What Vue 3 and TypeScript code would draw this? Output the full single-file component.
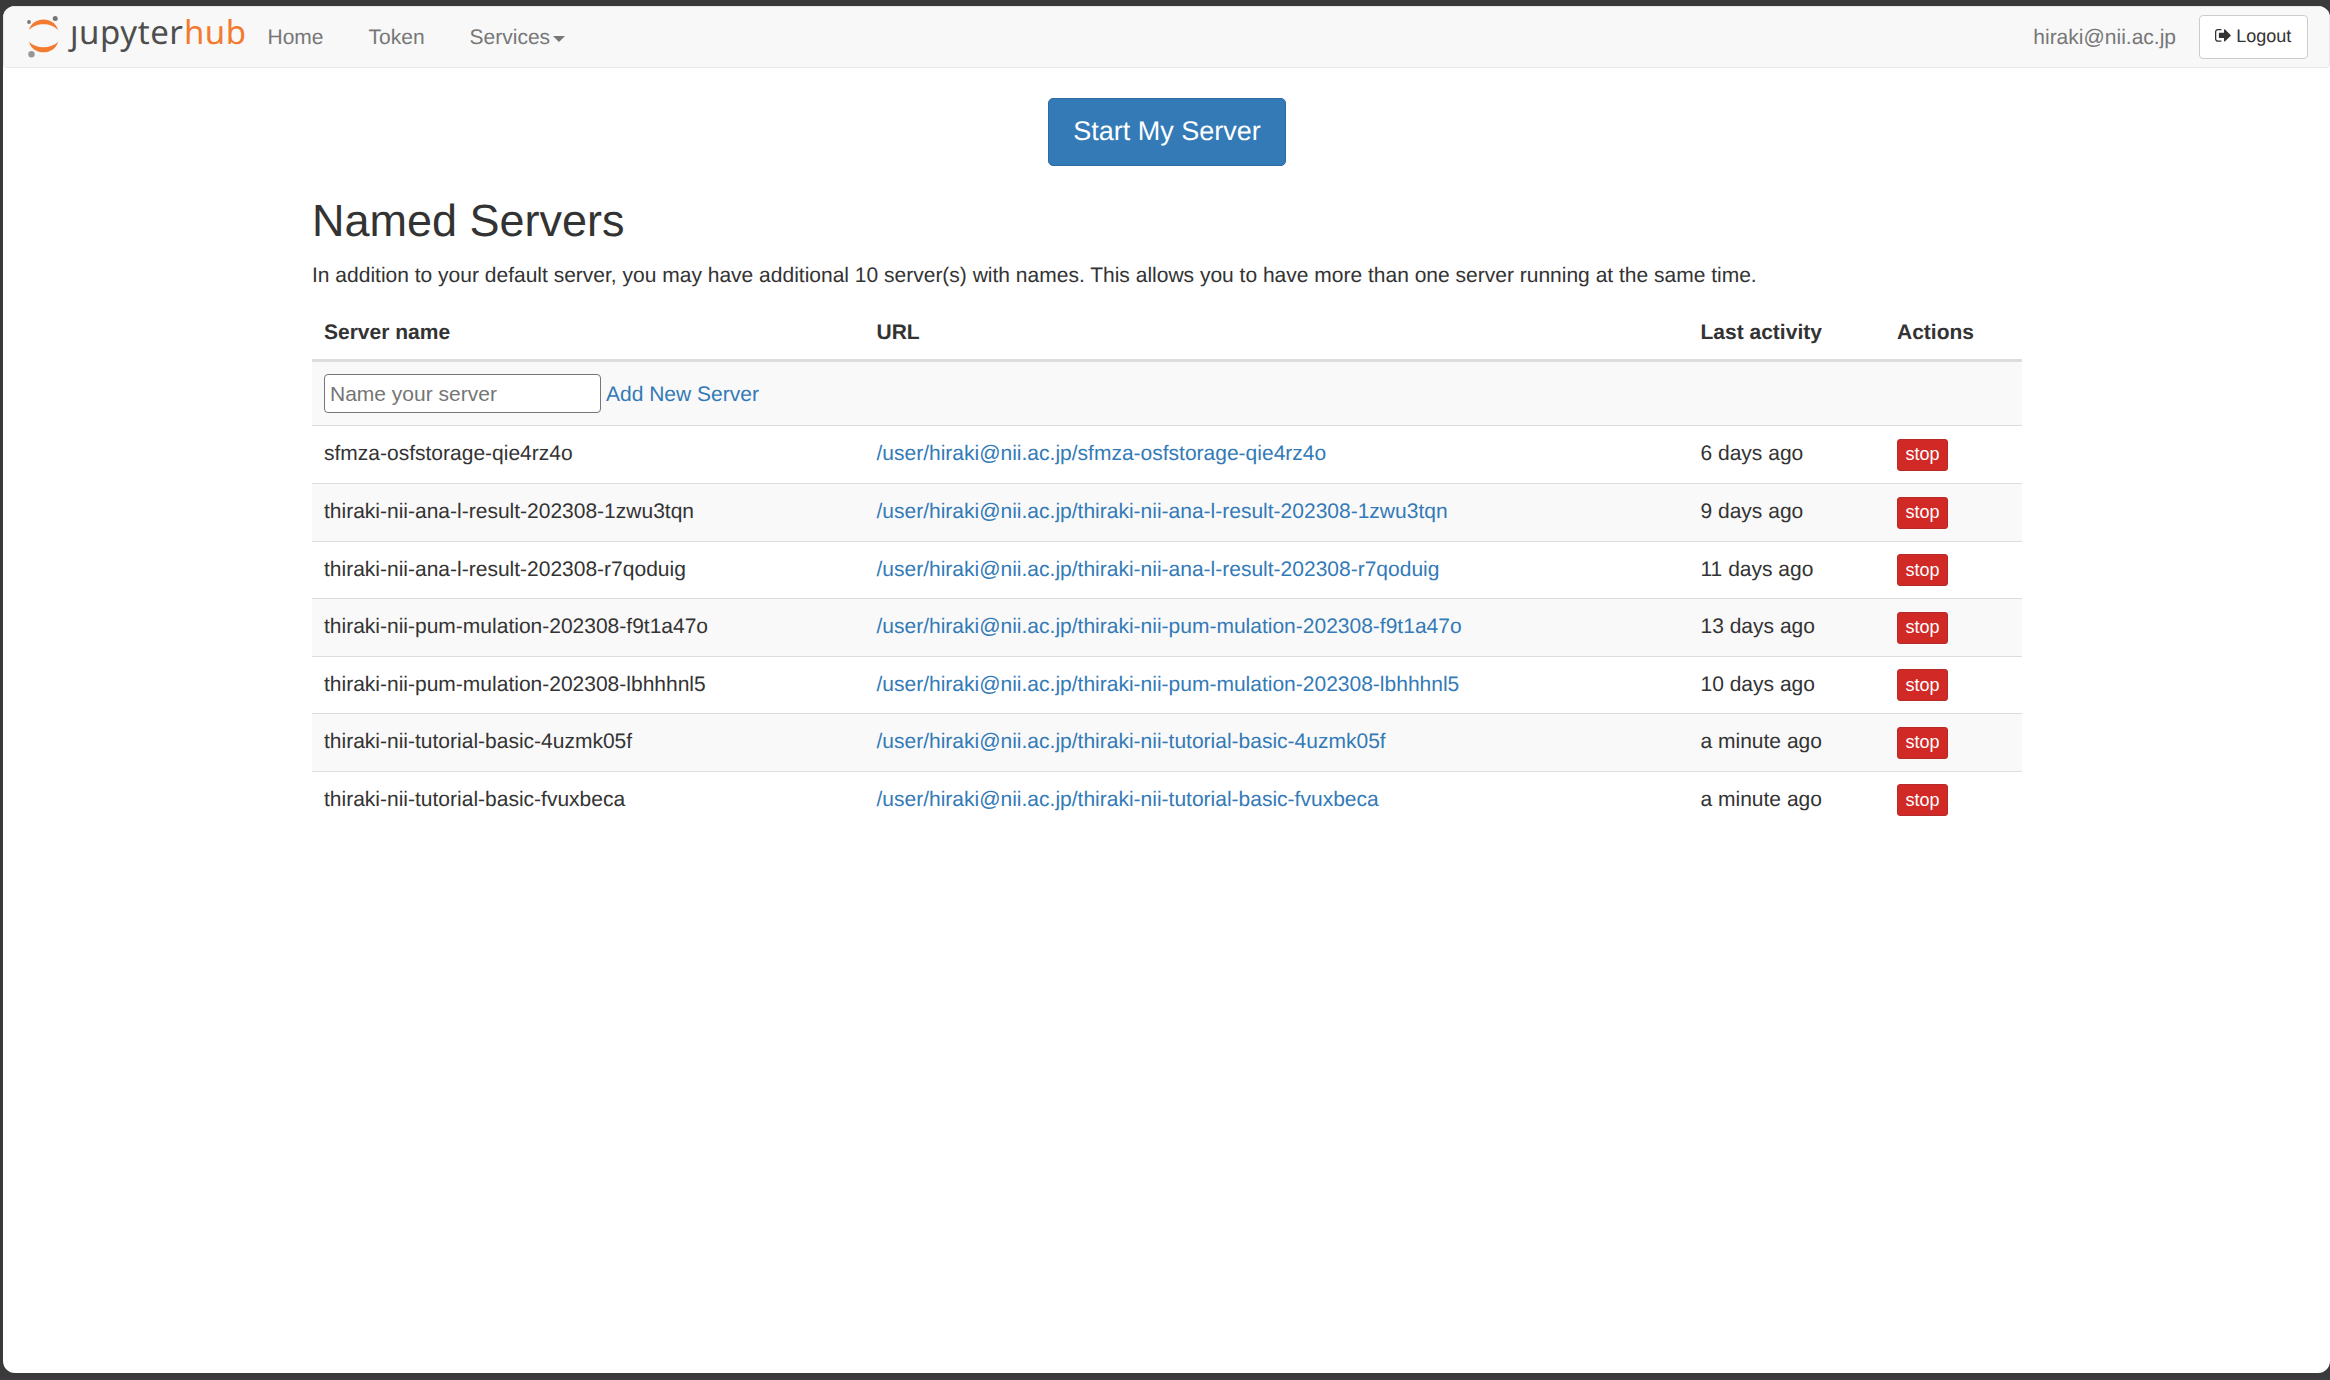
<script setup lang="ts">
import { ref } from 'vue'

interface Server {
  name: string
  activity: string
}

const user = 'hiraki@nii.ac.jp'
const newName = ref('')

const servers: Server[] = [
  { name: 'sfmza-osfstorage-qie4rz4o', activity: '6 days ago' },
  { name: 'thiraki-nii-ana-l-result-202308-1zwu3tqn', activity: '9 days ago' },
  { name: 'thiraki-nii-ana-l-result-202308-r7qoduig', activity: '11 days ago' },
  { name: 'thiraki-nii-pum-mulation-202308-f9t1a47o', activity: '13 days ago' },
  { name: 'thiraki-nii-pum-mulation-202308-lbhhhnl5', activity: '10 days ago' },
  { name: 'thiraki-nii-tutorial-basic-4uzmk05f', activity: 'a minute ago' },
  { name: 'thiraki-nii-tutorial-basic-fvuxbeca', activity: 'a minute ago' },
]
</script>

<template>
  <div class="window">
    <div class="page">
      <nav class="navbar">
        <a class="brand" href="#">
          <svg width="230" height="60" viewBox="25 7 230 60" role="img" aria-label="jupyterhub">
            <path fill="#f37b30" d="M29 30C32.500 16 54.500 16 58 30C51 22.300 36 22.300 29 30Z" />
            <path fill="#f37b30" d="M29 41.700C32.500 55.800 54.500 55.800 58 41.700C51 49 36 49 29 41.700Z" />
            <circle cx="29" cy="22" r="1.900" fill="#767677" />
            <circle cx="55.200" cy="18.600" r="2.500" fill="#767677" />
            <circle cx="31.500" cy="54.200" r="3.200" fill="#989798" />
            <g class="wordmark">
              <text x="70" y="44.300" textLength="113" fill="#4e4e4e">jupyter</text>
              <text x="184" y="44.300" textLength="62" fill="#f37b30">hub</text>
            </g>
            <!-- the wordmark's j carries no dot -->
            <rect x="66" y="14" width="14" height="10.500" fill="#f8f8f8" />
          </svg>
        </a>
        <a class="nav-link" href="#">Home</a>
        <a class="nav-link" href="#">Token</a>
        <a class="nav-link" href="#">Services<span class="caret"></span></a>
        <span class="user">{{ user }}</span>
        <a class="logout" href="#">
          <svg class="sign-out" viewBox="0 256 1568 1280" aria-hidden="true">
            <path fill="#333" d="M640 1440q0 4 1 20t.5 26.5-3 23.500-10 19.500-20.500 6.500h-320q-119 0-203.500-84.500t-84.500-203.500v-704q0-119 84.500-203.500t203.500-84.500h320q13 0 22.500 9.500t9.500 22.500q0 4 1 20t.5 26.500-3 23.500-10 19.500-20.500 6.500h-320q-66 0-113 47t-47 113v704q0 66 47 113t113 47h312l11.500 1 11.500 3 8 5.500 7 9 2 13.500zm928-544q0 26-19 45l-544 544q-19 19-45 19t-45-19-19-45v-288h-448q-26 0-45-19t-19-45v-384q0-26 19-45t45-19h448v-288q0-26 19-45t45-19 45 19l544 544q19 19 19 45z" />
          </svg>
          <span>Logout</span>
        </a>
      </nav>

      <main class="container">
        <a class="start" href="#">Start My Server</a>
        <h2>Named Servers</h2>
        <p>
          In addition to your default server, you may have additional 10 server(s) with names. This
          allows you to have more than one server running at the same time.
        </p>
        <div class="table" role="table">
          <div class="row head" role="row">
            <span role="columnheader">Server name</span>
            <span role="columnheader">URL</span>
            <span role="columnheader">Last activity</span>
            <span role="columnheader">Actions</span>
          </div>
          <div class="add-row" role="row">
            <input v-model="newName" type="text" placeholder="Name your server" />
            <a href="#">Add New Server</a>
          </div>
          <div v-for="s in servers" :key="s.name" class="row server" role="row">
            <span role="cell">{{ s.name }}</span>
            <a role="cell" href="#">/user/{{ user }}/{{ s.name }}</a>
            <span role="cell">{{ s.activity }}</span>
            <span class="action" role="cell"><button type="button">stop</button></span>
          </div>
        </div>
      </main>
    </div>
  </div>
</template>

<style>
body {
  background: #3a3a3a;
  overflow: hidden;
}
</style>

<style scoped>
* {
  box-sizing: border-box;
}

.window {
  height: 1380px;
  padding: 6px 0 7px 3px;
  background: linear-gradient(#3a3a3a 1374px, #3c3c42 1380px);
  color: #333;
  font: 21px/30px "Liberation Sans", Arial, sans-serif;
  text-rendering: geometricPrecision;
}

a {
  color: #337ab7;
  text-decoration: none;
}

.page {
  height: 1367px;
  border-radius: 12px;
  background: #fff;
  overflow: hidden;
}

.navbar {
  display: flex;
  align-items: flex-start;
  height: 62px;
  padding-right: 21px;
  border: 1px solid #e7e7e7;
  border-radius: 0 0 4px 4px;
  background: #f8f8f8;
}

.brand {
  width: 241px;
  height: 60px;
  padding-left: 21px;
}

.brand svg {
  display: block;
  margin-right: -10px;
}

.wordmark {
  font: 33px "Noto Sans", "Open Sans", sans-serif;
}

.nav-link {
  display: flex;
  padding: 16px 22.5px 0;
  color: #777;
}

.caret {
  width: 0;
  height: 0;
  margin: 13px 0 0 3px;
  border: 6px solid transparent;
  border-top-color: #777;
  border-bottom: 0;
}

.user {
  margin: 16px 23px 0 auto;
  color: #777;
}

.logout {
  display: flex;
  width: 109px;
  height: 44px;
  margin-top: 8px;
  padding: 7px 0 0 15px;
  border: 1px solid #ccc;
  border-radius: 4px;
  background: #fff;
  color: #333;
  font-size: 18px;
  line-height: 27px;
}

.sign-out {
  width: 15.75px;
  height: 12.86px;
  margin: 6px 5.5px 0 0;
}

.container {
  display: flex;
  flex-direction: column;
  width: 1710px;
  margin-left: 309px;
  padding-top: 30px;
}

.start {
  align-self: center;
  width: 238px;
  height: 68px;
  padding-top: 14px;
  border: 1px solid #2e6da4;
  border-radius: 5px;
  background: #337ab7;
  color: #fff;
  font-size: 27px;
  line-height: 36px;
  text-align: center;
}

h2 {
  margin: 30px 0 0;
  font-size: 45px;
  font-weight: 400;
  line-height: 49px;
}

p {
  margin: 16px 0 14px;
}

.row {
  display: grid;
  grid-template-columns: 552.5px 824px 196.5px 137px;
}

.row > * {
  padding: 13px 12px 0;
}

.head {
  height: 57px;
  border-bottom: 3px solid #ddd;
  font-weight: 700;
}

.add-row {
  display: flex;
  align-items: flex-start;
  gap: 5px;
  height: 63.4px;
  padding: 12px;
  background: #f9f9f9;
}

.add-row input {
  width: 277px;
  height: 39px;
  margin: 0;
  padding: 1px 5px;
  border: 1px solid #767676;
  border-radius: 4px;
  background: #fff;
  color: inherit;
  font: inherit;
}

.add-row input::placeholder {
  color: #757575;
}

.add-row a {
  margin-top: 6px;
}

.server {
  height: 57.5px;
  border-top: 1px solid #ddd;
}

.server:nth-child(3) {
  height: 57.7px;
}

.server:nth-child(even) {
  background: #f9f9f9;
}

.row .action {
  padding-top: 12.5px;
}

.action button {
  display: block;
  width: 51px;
  height: 32px;
  padding: 0;
  border: 1px solid #b52b27;
  border-radius: 3px;
  background: #d02926;
  color: #fff;
  font: 18px/27px "Liberation Sans", Arial, sans-serif;
}
</style>
